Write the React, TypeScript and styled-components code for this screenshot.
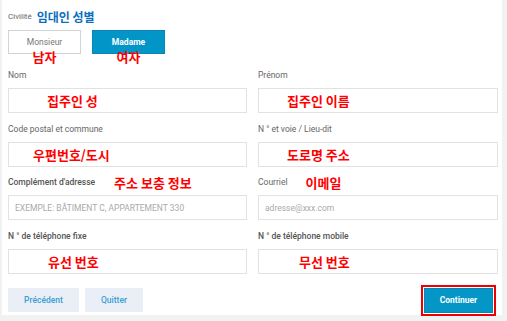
import React from 'react';
import styled, { createGlobalStyle } from 'styled-components';

const GlobalStyle = createGlobalStyle`
  html, body {
    margin: 0;
    padding: 0;
    background: #f2f2f2;
  }
  body {
    font-family: Roboto, "Liberation Sans", Arial, sans-serif;
  }
`;

const KR = `"Noto Sans CJK KR", "Noto Sans", sans-serif`;

const ScPage = styled.div`
  width: 507px;
  height: 321px;
  box-sizing: border-box;
  padding: 0 5px 6px 2px;
  background: #f2f2f2;
`;

const ScCard = styled.div`
  background: #fff;
  padding: 8px 4px 4px 6px;
  height: 315px;
  box-sizing: border-box;
`;

const ScTitle = styled.div`
  display: flex;
  align-items: center;
  gap: 5px;
  height: 16px;
`;

const ScSmall = styled.span`
  font-size: 8px;
  color: #666;
`;

const ScTitleKr = styled.span`
  font-family: ${KR};
  font-weight: 700;
  font-size: 12px;
  color: #0b6fbf;
`;

const ScGender = styled.div`
  display: flex;
  gap: 11px;
  margin-top: 6px;
`;

const ScToggle = styled.div<{ $active?: boolean }>`
  position: relative;
  width: 73px;
  height: 24px;
  box-sizing: border-box;
  display: flex;
  align-items: center;
  justify-content: center;
  font-size: 8.5px;
  font-weight: ${(p) => (p.$active ? 700 : 400)};
  color: ${(p) => (p.$active ? '#fff' : '#777')};
  background: ${(p) => (p.$active ? '#0296c8' : '#fff')};
  border: 1px solid ${(p) => (p.$active ? '#0a85b5' : '#cfd4d6')};
`;

const ScMark = styled.span`
  position: absolute;
  top: 18px;
  left: 50%;
  transform: translateX(-50%);
  font-family: ${KR};
  font-weight: 700;
  font-size: 13px;
  line-height: 16px;
  color: #ff0000;
  white-space: nowrap;
`;

const ScGrid = styled.div`
  display: grid;
  grid-template-columns: 239px 240px;
  column-gap: 11px;
  row-gap: 9.5px;
  margin-top: 15px;
`;

const ScField = styled.div`
  display: flex;
  flex-direction: column;
`;

const ScLabel = styled.div<{ $strong?: boolean }>`
  display: flex;
  align-items: center;
  height: 12px;
  margin-bottom: 7px;
  font-size: 8.5px;
  font-weight: ${(p) => (p.$strong ? 500 : 400)};
  color: ${(p) => (p.$strong ? '#555' : '#666')};
  white-space: nowrap;
`;

const ScLabelMark = styled.span<{ $gap: number }>`
  margin-left: ${(p) => p.$gap}px;
  font-family: ${KR};
  font-weight: 700;
  font-size: 13px;
  color: #ff0000;
`;

const ScBox = styled.div`
  height: 25px;
  box-sizing: border-box;
  border: 1px solid #e2e2e2;
  display: flex;
  align-items: center;
  padding-left: 6px;
  background: #fff;
`;

const ScBoxMark = styled.span<{ $indent: number }>`
  margin-left: ${(p) => p.$indent}px;
  font-family: ${KR};
  font-weight: 700;
  font-size: 13px;
  color: #ff0000;
  white-space: nowrap;
`;

const ScPlaceholder = styled.span`
  font-size: 8.5px;
  color: #aaa;
  white-space: nowrap;
`;

const ScActions = styled.div`
  display: flex;
  align-items: center;
  margin-top: 14px;
`;

const ScGhost = styled.div<{ $w: number }>`
  width: ${(p) => p.$w}px;
  height: 24px;
  margin-right: 6px;
  display: flex;
  align-items: center;
  justify-content: center;
  background: #eaeef6;
  color: #3b9ed2;
  font-size: 8.5px;
  font-weight: 500;
`;

const ScPrimary = styled.div`
  margin-left: auto;
  margin-right: 5px;
  width: 69px;
  height: 25px;
  box-sizing: border-box;
  display: flex;
  align-items: center;
  justify-content: center;
  background: #0496c7;
  border: 1px solid #0a86b3;
  color: #fff;
  font-size: 8.5px;
  font-weight: 700;
  outline: 2px solid #ee0000;
  outline-offset: 1px;
`;

type Field = {
  label: string;
  strong?: boolean;
  labelMark?: string;
  labelGap?: number;
  mark?: string;
  indent?: number;
  placeholder?: string;
};

const fields: Field[] = [
  { label: 'Nom', mark: '집주인 성', indent: 32 },
  { label: 'Prénom', mark: '집주인 이름', indent: 22 },
  { label: 'Code postal et commune', mark: '우편번호/도시', indent: 18 },
  { label: 'N ° et voie / Lieu-dit', mark: '도로명 주소', indent: 22 },
  { label: "Complément d'adresse", strong: true, labelMark: '주소 보충 정보', labelGap: 19, placeholder: 'EXEMPLE: BÂTIMENT C, APPARTEMENT 330' },
  { label: 'Courriel', labelMark: '이메일', labelGap: 18, placeholder: 'adresse@xxx.com' },
  { label: 'N ° de téléphone fixe', strong: true, mark: '유선 번호', indent: 33 },
  { label: 'N ° de téléphone mobile', strong: true, mark: '무선 번호', indent: 34 }
];

export default function App(): JSX.Element {
  return <>
    <GlobalStyle />
    <ScPage>
      <ScCard>
        <ScTitle>
          <ScSmall>Civilité</ScSmall>
          <ScTitleKr>임대인 성별</ScTitleKr>
        </ScTitle>
        <ScGender>
          <ScToggle>
            Monsieur
            <ScMark>남자</ScMark>
          </ScToggle>
          <ScToggle $active>
            Madame
            <ScMark>여자</ScMark>
          </ScToggle>
        </ScGender>
        <ScGrid>
          {fields.map((f) => (
            <ScField key={f.label}>
              <ScLabel $strong={f.strong}>
                {f.label}
                {f.labelMark && <ScLabelMark $gap={f.labelGap || 0}>{f.labelMark}</ScLabelMark>}
              </ScLabel>
              <ScBox>
                {f.placeholder && <ScPlaceholder>{f.placeholder}</ScPlaceholder>}
                {f.mark && <ScBoxMark $indent={f.indent || 0}>{f.mark}</ScBoxMark>}
              </ScBox>
            </ScField>
          ))}
        </ScGrid>
        <ScActions>
          <ScGhost $w={71}>Précédent</ScGhost>
          <ScGhost $w={58}>Quitter</ScGhost>
          <ScPrimary>Continuer</ScPrimary>
        </ScActions>
      </ScCard>
    </ScPage>
  </>;
}
